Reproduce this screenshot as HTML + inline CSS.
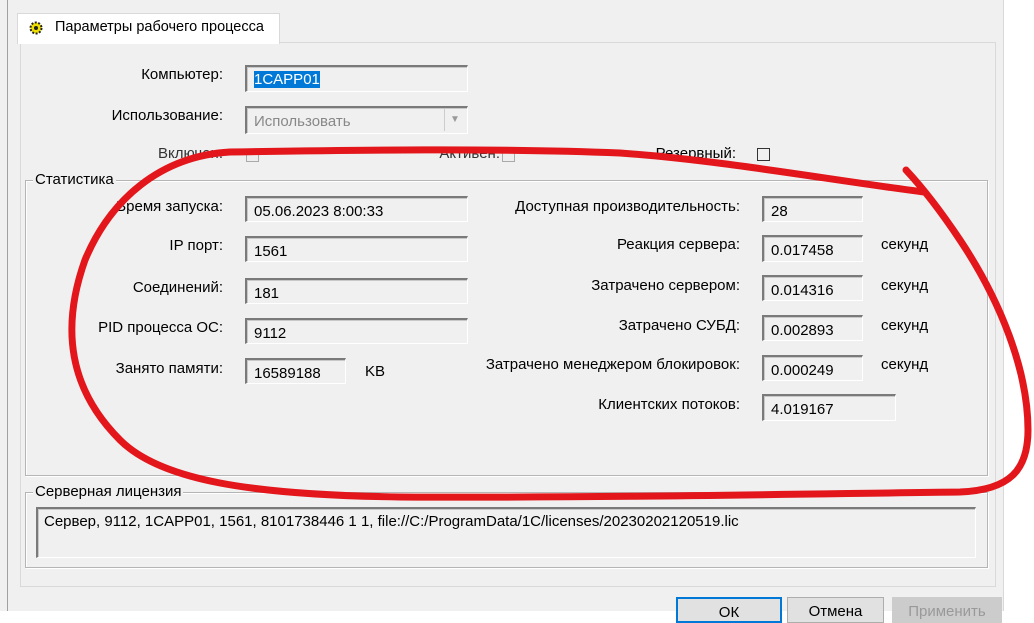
<!DOCTYPE html>
<html><head><meta charset="utf-8"><style>
body{margin:0;width:1034px;height:611px;overflow:hidden;background:#fff;font-family:"Liberation Sans","DejaVu Sans",sans-serif;font-size:15px;color:#000;position:relative}
.a{position:absolute}
.win{left:0;top:0;width:1003px;height:611px;background:#f0f0f0;border-right:1px solid #d8d8d8}
.edge{left:7px;top:0;width:1px;height:611px;background:#a0a0a0}
.tab{left:17px;top:13px;width:261px;height:30px;background:#fff;border:1px solid #d9d9d9;border-bottom:none}
.panel{left:20px;top:42px;width:974px;height:543px;background:#f0f0f0;border:1px solid #d9d9d9}
.in{background:#f0f0f0;border-top:2px solid #7a7a7a;border-left:2px solid #7a7a7a;border-right:1px solid #fff;border-bottom:1px solid #fff;box-shadow:inset 1px 1px 0 #c8c8c8;box-sizing:border-box;padding:5px 0 0 7px;font-size:15px;white-space:nowrap}
.lbl{text-align:right;font-size:15px;white-space:nowrap}
.grp{border:1px solid #b5b5b5;box-shadow:inset 1px 1px 0 #fff,1px 1px 0 #fff}
.gt{background:#f0f0f0;padding:0 2px;font-size:15px}
.btn{border:1px solid #adadad;background:#e1e1e1;text-align:center;box-sizing:border-box;padding-top:5px}
.cb{width:13px;height:13px;border:1px solid #333;background:#fff;box-sizing:border-box}
</style></head><body>
<div class="a win"></div>
<div class="a edge"></div>
<div class="a panel"></div>
<div class="a tab"></div>
<svg class="a" style="left:27px;top:19px" width="18" height="18" viewBox="0 0 18 18"><circle cx="9" cy="9" r="5.5" fill="#f0e000" stroke="#222" stroke-width="2" stroke-dasharray="2 1.5"/><circle cx="9" cy="9" r="2" fill="#222"/></svg>
<div class="a" style="left:55px;top:19px;font-size:14.5px">Параметры рабочего процесса</div>

<div class="a lbl" style="left:60px;top:66px;width:163px">Компьютер:</div>
<div class="a in" style="left:245px;top:65px;width:223px;height:27px;padding-top:4px"><span style="background:#0078d7;color:#fff">1CAPP01</span></div>
<div class="a lbl" style="left:60px;top:107px;width:163px">Использование:</div>
<div class="a in" style="left:245px;top:106px;width:223px;height:28px;color:#888">Использовать</div>
<div class="a" style="left:444px;top:109px;width:20px;height:22px;border-left:1px solid #ccc;color:#999;font-size:10px;text-align:center;line-height:22px">▼</div>
<div class="a lbl" style="left:100px;top:145px;width:123px;color:#333">Включен:</div>
<div class="a cb" style="left:246px;top:149px;border-color:#aaa;background:#eee"></div>
<div class="a lbl" style="left:380px;top:145px;width:120px;color:#333">Активен:</div>
<div class="a cb" style="left:502px;top:149px;border-color:#aaa;background:#eee"></div>
<div class="a lbl" style="left:600px;top:145px;width:136px">Резервный:</div>
<div class="a cb" style="left:757px;top:148px;background:#f0f0f0"></div>

<div class="a grp" style="left:25px;top:180px;width:961px;height:294px"></div>
<div class="a gt" style="left:33px;top:171px">Статистика</div>

<div class="a lbl" style="left:40px;top:198px;width:183px">Время запуска:</div>
<div class="a in" style="left:245px;top:196px;width:223px;height:26px">05.06.2023 8:00:33</div>
<div class="a lbl" style="left:40px;top:237px;width:183px">IP порт:</div>
<div class="a in" style="left:245px;top:236px;width:223px;height:26px">1561</div>
<div class="a lbl" style="left:40px;top:279px;width:183px">Соединений:</div>
<div class="a in" style="left:245px;top:278px;width:223px;height:26px">181</div>
<div class="a lbl" style="left:40px;top:319px;width:183px">PID процесса ОС:</div>
<div class="a in" style="left:245px;top:318px;width:223px;height:26px">9112</div>
<div class="a lbl" style="left:40px;top:360px;width:183px">Занято памяти:</div>
<div class="a in" style="left:245px;top:358px;width:101px;height:26px">16589188</div>
<div class="a" style="left:365px;top:363px">KB</div>

<div class="a lbl" style="left:440px;top:198px;width:300px">Доступная производительность:</div>
<div class="a in" style="left:762px;top:196px;width:101px;height:26px">28</div>
<div class="a lbl" style="left:440px;top:236px;width:300px">Реакция сервера:</div>
<div class="a in" style="left:762px;top:235px;width:101px;height:27px">0.017458</div>
<div class="a" style="left:881px;top:236px">секунд</div>
<div class="a lbl" style="left:440px;top:277px;width:300px">Затрачено сервером:</div>
<div class="a in" style="left:762px;top:275px;width:101px;height:26px">0.014316</div>
<div class="a" style="left:881px;top:277px">секунд</div>
<div class="a lbl" style="left:440px;top:317px;width:300px">Затрачено СУБД:</div>
<div class="a in" style="left:762px;top:315px;width:101px;height:26px">0.002893</div>
<div class="a" style="left:881px;top:317px">секунд</div>
<div class="a lbl" style="left:440px;top:356px;width:300px">Затрачено менеджером блокировок:</div>
<div class="a in" style="left:762px;top:355px;width:101px;height:26px">0.000249</div>
<div class="a" style="left:881px;top:356px">секунд</div>
<div class="a lbl" style="left:440px;top:396px;width:300px">Клиентских потоков:</div>
<div class="a in" style="left:762px;top:394px;width:134px;height:27px">4.019167</div>

<div class="a grp" style="left:25px;top:492px;width:961px;height:74px"></div>
<div class="a gt" style="left:33px;top:483px">Серверная лицензия</div>
<div class="a in" style="left:36px;top:507px;width:940px;height:51px;padding:4px 0 0 6px">Сервер, 9112, 1CAPP01, 1561, 8101738446 1 1, file://C:/ProgramData/1C/licenses/20230202120519.lic</div>

<div class="a btn" style="left:676px;top:597px;width:106px;height:26px;border:2px solid #0078d7">ОК</div>
<div class="a btn" style="left:787px;top:597px;width:97px;height:26px">Отмена</div>
<div class="a btn" style="left:892px;top:597px;width:110px;height:26px;color:#999;border-color:#ccc;background:#ccc">Применить</div>

<svg class="a" style="left:0;top:0" width="1034" height="611" viewBox="0 0 1034 611">
<g fill="none" stroke="#e3161b" stroke-width="7" stroke-linecap="round" stroke-linejoin="round">
<path d="M924 192 C830 180 720 160 620 153 C500 148 350 150 230 152 C160 156 110 200 85 260 C60 330 70 390 120 440 C160 480 250 495 400 497 C600 498 800 494 960 492 C1010 490 1028 470 1028 430 C1028 370 1000 300 960 240 C940 210 920 185 906 170"/>
</g>
</svg>
</body></html>
